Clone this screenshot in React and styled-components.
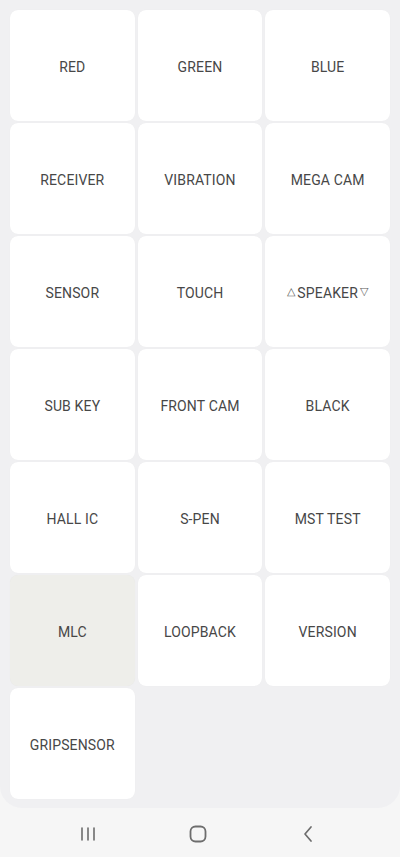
import React from "react";
import styled, { createGlobalStyle } from "styled-components";

const Global = createGlobalStyle`
  html, body { margin: 0; padding: 0; background: #f6f6f6; }
  body { font-family: Roboto, "Noto Sans", "Liberation Sans", sans-serif; }
  * { box-sizing: border-box; }
`;

const Page = styled.div`
  width: 400px;
  height: 857px;
  display: flex;
  flex-direction: column;
  background: #f6f6f6;
`;

const Panel = styled.div`
  background: #f0f0f2;
  border-radius: 0 0 22px 22px;
  padding: 10px 10px 9px 10px;
  height: 808px;
`;

const Grid = styled.div`
  display: grid;
  grid-template-columns: repeat(3, 1fr);
  grid-auto-rows: 111px;
  gap: 2px 3px;
`;

const Tile = styled.div`
  background: ${(p) => (p.$active ? "#eeeeea" : "#ffffff")};
  border-radius: 8px;
  display: flex;
  align-items: center;
  justify-content: center;
  padding-top: 2px;
  color: #474747;
  font-size: 14px;
  letter-spacing: 0.15px;
  box-shadow: 0 0 1px rgba(0, 0, 0, 0.05);
`;

const Tri = styled.span`
  font-size: 11px;
  color: #5a5a5a;
  margin: 0 2px;
  position: relative;
  top: -1px;
`;

const Nav = styled.div`
  flex: 1;
  display: flex;
  align-items: center;
  justify-content: space-between;
  padding: 2px 80px 0 76px;
`;

const NavBtn = styled.div`
  width: 24px;
  height: 24px;
  display: flex;
  align-items: center;
  justify-content: center;
  color: #6d6d6d;
`;

const items = [
  "RED", "GREEN", "BLUE",
  "RECEIVER", "VIBRATION", "MEGA CAM",
  "SENSOR", "TOUCH", "SPEAKER",
  "SUB KEY", "FRONT CAM", "BLACK",
  "HALL IC", "S-PEN", "MST TEST",
  "MLC", "LOOPBACK", "VERSION",
  "GRIPSENSOR",
];

export default function App() {
  return (
    <Page>
      <Global />
      <Panel>
        <Grid>
          {items.map((it) => (
            <Tile key={it} $active={it === "MLC"}>
              {it === "SPEAKER" ? (
                <>
                  <Tri>△</Tri>SPEAKER<Tri>▽</Tri>
                </>
              ) : (
                it
              )}
            </Tile>
          ))}
        </Grid>
      </Panel>
      <Nav>
        <NavBtn>
          <svg width="18" height="16" viewBox="0 0 18 16">
            <g stroke="currentColor" strokeWidth="1.6" strokeLinecap="round">
              <line x1="3" y1="2" x2="3" y2="14" />
              <line x1="9" y1="2" x2="9" y2="14" />
              <line x1="15" y1="2" x2="15" y2="14" />
            </g>
          </svg>
        </NavBtn>
        <NavBtn>
          <svg width="18" height="18" viewBox="0 0 18 18">
            <rect x="1.5" y="1.5" width="15" height="15" rx="5" fill="none" stroke="currentColor" strokeWidth="1.8" />
          </svg>
        </NavBtn>
        <NavBtn>
          <svg width="12" height="18" viewBox="0 0 12 18">
            <polyline points="9,2 3,9 9,16" fill="none" stroke="currentColor" strokeWidth="1.7" strokeLinecap="round" strokeLinejoin="round" />
          </svg>
        </NavBtn>
      </Nav>
    </Page>
  );
}
